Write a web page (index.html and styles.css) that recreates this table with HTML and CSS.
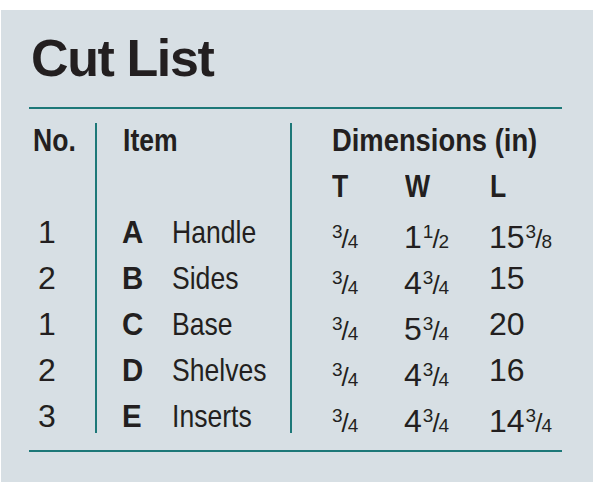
FILE: index.html
```html
<!DOCTYPE html>
<html lang="en">
<head>
<meta charset="utf-8">
<title>Cut List</title>
<link rel="stylesheet" href="styles.css">
</head>
<body>
<div class="panel">
  <h1 class="title">Cut List</h1>
  <div class="rule"></div>
  <div class="table">
    <div class="sep sep-1"></div>
    <div class="sep sep-2"></div>

    <div class="c-no hd r1"><span class="cn">No.</span></div>
    <div class="c-item hd r1"><span class="cn">Item</span></div>
    <div class="c-dim hd r1"><span class="cn cn-wide">Dimensions (in)</span></div>

    <div class="c-dim hd r2"><span class="t"><span class="cn">T</span></span><span class="w"><span class="cn">W</span></span><span class="l"><span class="cn">L</span></span></div>

    <div class="c-no num r3">1</div>
    <div class="c-item r3"><span class="key">A</span><span class="cn">Handle</span></div>
    <div class="c-dim r3"><span class="t"><span class="nu">3</span><span class="sl">/</span><span class="de">4</span></span><span class="w">1<span class="nu">1</span><span class="sl">/</span><span class="de">2</span></span><span class="l">15<span class="nu">3</span><span class="sl">/</span><span class="de">8</span></span></div>

    <div class="c-no num r4">2</div>
    <div class="c-item r4"><span class="key">B</span><span class="cn">Sides</span></div>
    <div class="c-dim r4"><span class="t"><span class="nu">3</span><span class="sl">/</span><span class="de">4</span></span><span class="w">4<span class="nu">3</span><span class="sl">/</span><span class="de">4</span></span><span class="l">15</span></div>

    <div class="c-no num r5">1</div>
    <div class="c-item r5"><span class="key">C</span><span class="cn">Base</span></div>
    <div class="c-dim r5"><span class="t"><span class="nu">3</span><span class="sl">/</span><span class="de">4</span></span><span class="w">5<span class="nu">3</span><span class="sl">/</span><span class="de">4</span></span><span class="l">20</span></div>

    <div class="c-no num r6">2</div>
    <div class="c-item r6"><span class="key">D</span><span class="cn">Shelves</span></div>
    <div class="c-dim r6"><span class="t"><span class="nu">3</span><span class="sl">/</span><span class="de">4</span></span><span class="w">4<span class="nu">3</span><span class="sl">/</span><span class="de">4</span></span><span class="l">16</span></div>

    <div class="c-no num r7">3</div>
    <div class="c-item r7"><span class="key">E</span><span class="cn">Inserts</span></div>
    <div class="c-dim r7"><span class="t"><span class="nu">3</span><span class="sl">/</span><span class="de">4</span></span><span class="w">4<span class="nu">3</span><span class="sl">/</span><span class="de">4</span></span><span class="l">14<span class="nu">3</span><span class="sl">/</span><span class="de">4</span></span></div>
  </div>
  <div class="rule rule-bottom"></div>
</div>
</body>
</html>
```

FILE: styles.css
```css
html, body {
  margin: 0;
  padding: 0;
  background: #ffffff;
}

body {
  padding: 10px 0 0 1px;
  color: #231f20;
  font-family: "Liberation Sans", Arial, sans-serif;
}

.panel {
  width: 592px;
  height: 472px;
  box-sizing: border-box;
  background: #d7dfe4;
  padding: 0 31px 0 28px;
}

.title {
  margin: 0;
  padding-top: 18px;
  padding-left: 2px;
  font-weight: bold;
  font-size: 52px;
  line-height: 60px;
  letter-spacing: -1.4px;
}

.rule {
  height: 2px;
  background: #1d7878;
  margin-top: 19px;
}

.rule-bottom {
  margin-top: 11px;
  width: 533px;
}

.table {
  display: grid;
  grid-template-columns: 66px 2px 193px 2px 1fr;
  grid-template-rows: 45px repeat(6, 46px);
  margin-top: 9px;
  font-size: 32px;
  line-height: 46px;
}

.r1 { grid-row: 1; }
.r2 { grid-row: 2; }
.r3 { grid-row: 3; }
.r4 { grid-row: 4; }
.r5 { grid-row: 5; }
.r6 { grid-row: 6; }
.r7 { grid-row: 7; }

.sep {
  grid-row: 1 / -1;
  background: #1d7878;
  margin: 5px 0 6px;
}
.sep-1 { grid-column: 2; }
.sep-2 { grid-column: 4; }

.c-no { grid-column: 1; padding-left: 3px; white-space: nowrap; }
.c-item { grid-column: 3; padding-left: 25px; display: flex; white-space: nowrap; }
.c-dim { grid-column: 5; padding-left: 39px; display: flex; white-space: nowrap; }

.cn {
  display: inline-block;
  transform: scaleX(0.83);
  transform-origin: 0 50%;
  white-space: nowrap;
}
.cn-wide { transform: scaleX(0.855); }
.hd .cn { margin-left: 1px; }

.hd {
  font-weight: bold;
  line-height: 45px;
}
.r2.hd { line-height: 46px; }

.num { padding-left: 9px; }

.key {
  width: 50px;
  flex: none;
  font-weight: bold;
  font-size: 32px;
  transform: scaleX(0.92);
  transform-origin: 0 50%;
}

.t { width: 73px; flex: none; }
.w { width: 85px; flex: none; }
.l { flex: 1; }

.nu {
  font-size: 19px;
  vertical-align: 10px;
  margin-left: 1px;
}
.sl {
  font-size: 26px;
  margin: 0 -1px;
}
.de {
  font-size: 19px;
}
```
